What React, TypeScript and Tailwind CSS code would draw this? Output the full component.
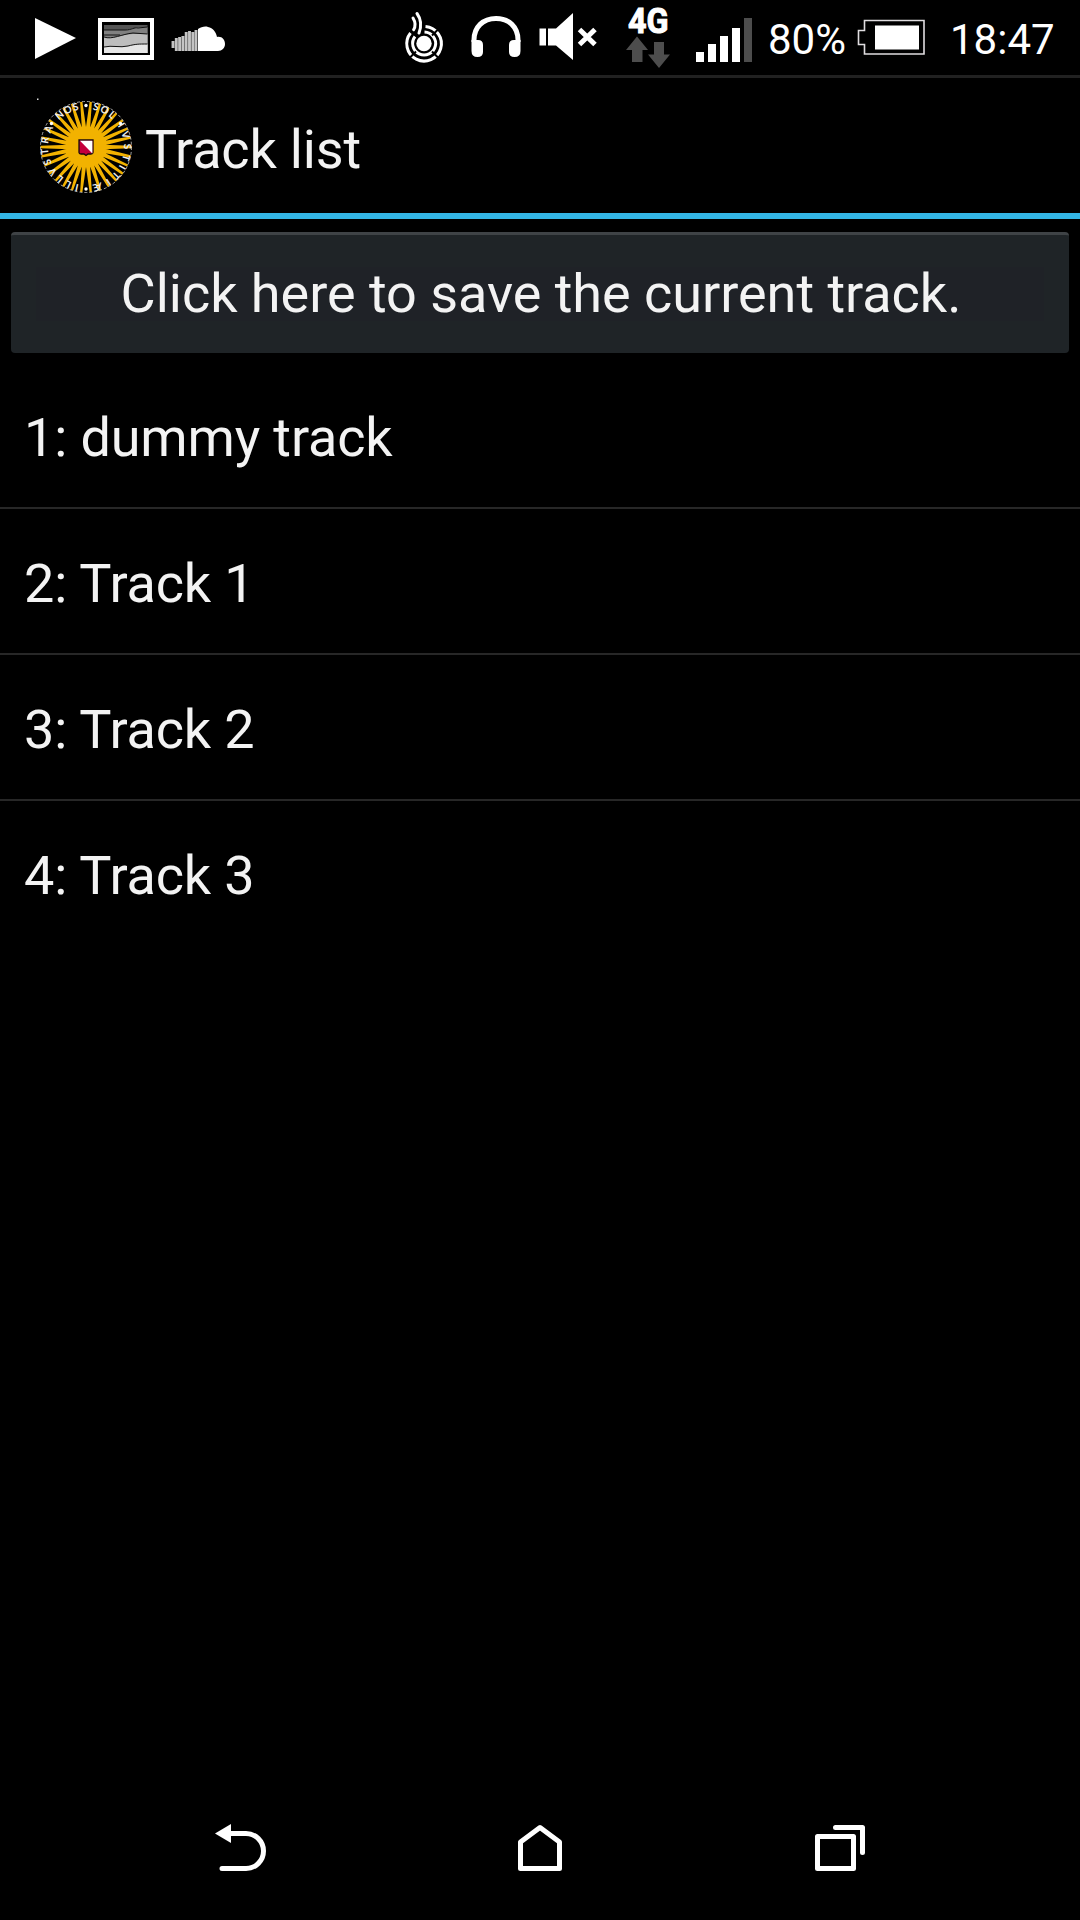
import React from "react";

const tracks = ["dummy track", "Track 1", "Track 2", "Track 3"];

const RAYS = 30;
const rayPath = Array.from({ length: RAYS }, (_, i) => {
  const a = ((i + 0.5) * 2 * Math.PI) / RAYS;
  const p = (r: number, t: number) =>
    `${(46 + r * Math.sin(t)).toFixed(2)} ${(46 - r * Math.cos(t)).toFixed(2)}`;
  return `M${p(17, a - 0.13)}L${p(45.5, a - 0.025)}L${p(45.5, a + 0.025)}L${p(17, a + 0.13)}Z`;
}).join("");

const motto = [
  { word: "SOL", start: 6.5, length: 22 },
  { word: "IVSTITIÆ", start: 37, length: 76 },
  { word: "ILLVSTRA", start: 126, length: 73 },
  { word: "NOS", start: 208, length: 23 },
];

function StatusIconsLeft() {
  return (
    <svg width="240" height="75" viewBox="0 0 240 75" className="shrink-0">
      <path d="M35 18L76 38L35 59Z" fill="#fff" />
      <rect x="98" y="18" width="56" height="42" fill="#fff" />
      <rect x="102" y="22" width="48" height="33" fill="#000" />
      <rect x="104" y="25" width="43.500" height="28" fill="#555" />
      <path d="M104 30H125L139 27H147.500V53H104Z" fill="#808080" />
      <path d="M104 37C112 40 122 34 133 34L147.500 34V53H104Z" fill="#bdbdbd" />
      <path d="M104 47C112 45 120 48 128 46S138 44 147.500 44V53H104Z" fill="#e6e6e6" />
      <path
        d="M104 30H125C132 30 134 27 138 28L147.500 27M104 35H120M104 37C112 40 122 34 133 33L147.500 34M104 47C112 45 120 48 128 46S138 44 147.500 44"
        fill="none"
        stroke="#111"
        strokeWidth="1"
      />
      <path
        d="M198 51V29C201 27 205 26 208 27C213 28 216 32 217 37C222 36 225 40 225 44C225 48 222 51 218 51Z"
        fill="#fff"
      />
      <path
        d="M173 41V48M176.300 38V51M179.600 37V51M182.900 36V51M186.200 32V51M189.500 31V51M192.800 32V51M196 30V51"
        stroke="#c4c4c4"
        strokeWidth="2.900"
      />
    </svg>
  );
}

function StatusIconsRight() {
  return (
    <svg width="362" height="75" viewBox="400 0 362 75" className="shrink-0">
      <g fill="none" stroke="#fff">
        <circle cx="424" cy="43.500" r="7.700" fill="#fff" stroke="none" />
        <path d="M424.500 32A11.500 11.500 0 1 1 415 36.500" strokeWidth="3" />
        <path d="M425.500 26.500A17.300 17.300 0 1 1 410.500 33" strokeWidth="3" />
        <path d="M417 13.500C421 19 422 25 419 33M413 18C416 23 416 26 413.500 30" strokeWidth="3" strokeLinecap="round" />
        <path d="M432 35.500L438 29.500M432 51.500L438 57.500M416 51.500L410 57.500M416 35.500L410 29.500" stroke="#000" strokeWidth="2" />
      </g>
      <path d="M474 42V40C474 27 483 18.500 496 18.500S518 27 518 40V42" fill="none" stroke="#fff" strokeWidth="5" />
      <path
        d="M471.500 40H478Q483 40 483 45V52Q483 57 477.500 57Q471.500 57 471.500 51ZM520.500 40H514Q509 40 509 45V52Q509 57 514.500 57Q520.500 57 520.500 51Z"
        fill="#fff"
      />
      <path d="M539.500 28.500H546V45.500H539.500ZM548 28.500H556L573 13V60L556 45.500H548Z" fill="#fff" />
      <path d="M579.500 29.500L595 44.500M595 29.500L579.500 44.500" stroke="#fff" strokeWidth="5" />
      <text
        x="628"
        y="33.200"
        fill="#fff"
        stroke="#fff"
        strokeWidth="1"
        fontSize="34.500"
        fontWeight="700"
        textLength="40.500"
        lengthAdjust="spacingAndGlyphs"
        className="font-['Roboto',sans-serif]"
      >
        4G
      </text>
      <path d="M637 36.500L648 50H642.500V62H632V50H626ZM654 42H664V54.500H670L659 68L648 54.500H654Z" fill="#4d4d4d" />
      <path d="M696 52H704V62H696ZM708 44H716V62H708ZM720 36H728V62H720ZM732 28H740V62H732Z" fill="#fff" />
      <rect x="744" y="18" width="8" height="44" fill="#4d4d4d" />
    </svg>
  );
}

function Battery() {
  return (
    <svg width="68" height="36" viewBox="857 19 68 36" className="shrink-0">
      <path d="M864.500 20.500H924V54H864.500V44.500H858.500V30.500H864.500Z" fill="none" stroke="#e0dde0" strokeWidth="1.600" />
      <rect x="875" y="25.500" width="44" height="24" fill="#fff" />
    </svg>
  );
}

function Seal() {
  return (
    <svg width="100" height="100" viewBox="-4 -4 100 100" className="shrink-0">
      <defs>
        <path id="ring" d="M46 8A38 38 0 1 1 45.990 8" />
      </defs>
      <rect x="-3" y="-2.500" width="1.500" height="1.500" fill="#ddd" />
      <path d={rayPath} fill="#f2b200" />
      <circle cx="46" cy="46" r="20" fill="#f2b200" />
      <circle cx="46" cy="46" r="45.500" fill="none" stroke="#ccc" strokeWidth="0.800" strokeDasharray="3 2" />
      {motto.map((m) => (
        <text
          key={m.word}
          fill="#eee"
          fontSize="10"
          fontWeight="700"
          textLength={m.length}
          className="font-['Lato',sans-serif]"
        >
          <textPath href="#ring" startOffset={m.start}>
            {m.word}
          </textPath>
        </text>
      ))}
      <g fill="#fff">
        <circle cx="46" cy="4.500" r="1.700" />
        <circle cx="80.500" cy="22.500" r="1.700" />
        <circle cx="46" cy="88" r="1.700" />
        <circle cx="11.500" cy="22.500" r="1.700" />
      </g>
      <path d="M39 39H53V51.500Q53 53 51 53H48L46 54.500L44 53H41Q39 53 39 51.500Z" fill="#c4003c" stroke="#1a0a0a" strokeWidth="1.300" />
      <path d="M40 39.700H52.400V52.400Z" fill="#fff" />
    </svg>
  );
}

export default function App() {
  return (
    <div className="flex h-[1920px] w-[1080px] flex-col overflow-hidden bg-black font-['Roboto',sans-serif] text-[54px] leading-[64px] text-[#f3f3f3]">
      <header className="flex h-[78px] items-start border-b-[3px] border-[#212121] text-[42px] leading-[75px] text-white">
        <StatusIconsLeft />
        <div className="w-[160px]" />
        <StatusIconsRight />
        <span className="ml-[6px] w-[89px] whitespace-nowrap pt-[2px]">80%</span>
        <div className="pt-[19px]">
          <Battery />
        </div>
        <span className="ml-[25px] whitespace-nowrap pt-[2px]">18:47</span>
      </header>

      <div className="flex h-[141px] items-center border-b-[6px] border-[#33b5e5] pl-[36px]">
        <div className="pt-[2px]">
          <Seal />
        </div>
        <h1 className="ml-[9px] mt-[8px] tracking-[-0.18px]">Track list</h1>
      </div>

      <button className="mx-[11px] mt-[13px] flex h-[121px] shrink-0 items-center justify-center rounded-[4px] border-t-[3px] border-[#3f4346] bg-[#1f2427]">
        <span className="flex h-[54px] w-[1008px] items-center justify-center bg-[#1f2227] pl-[2px] whitespace-nowrap tracking-[-0.03px]">
          Click here to save the current track.
        </span>
      </button>

      <ul className="mt-[10px] flex-1 tracking-[-0.15px]">
        {tracks.map((name, i) => (
          <li
            key={name}
            className="flex h-[146px] items-center border-b-2 border-[#272727] px-[24px] pt-[5px] last:border-transparent"
          >
            {i + 1}: {name}
          </li>
        ))}
      </ul>

      <nav className="flex h-[140px] items-start pl-[190px]">
        <svg width="120" height="100" viewBox="0 0 120 100" className="mt-[20px]">
          <path d="M32 68.500H56A17.500 17.500 0 0 0 56 33.500H38" fill="none" stroke="#fff" strokeWidth="5" strokeLinecap="round" />
          <path d="M25 33.500L41 24V43Z" fill="#fff" />
        </svg>
        <svg width="120" height="100" viewBox="0 0 120 100" className="mt-[20px] ml-[170px]">
          <path d="M40.500 42L60 27.500L79.500 42V68.500H40.500Z" fill="none" stroke="#fff" strokeWidth="5" strokeLinejoin="round" />
        </svg>
        <svg width="120" height="100" viewBox="0 0 120 100" className="mt-[20px] ml-[190px]">
          <path d="M27.500 36.500H63.500V68.500H27.500ZM45.500 27.500H72.500V52.500" fill="none" stroke="#fff" strokeWidth="5" strokeLinejoin="round" strokeLinecap="round" />
        </svg>
      </nav>
    </div>
  );
}
